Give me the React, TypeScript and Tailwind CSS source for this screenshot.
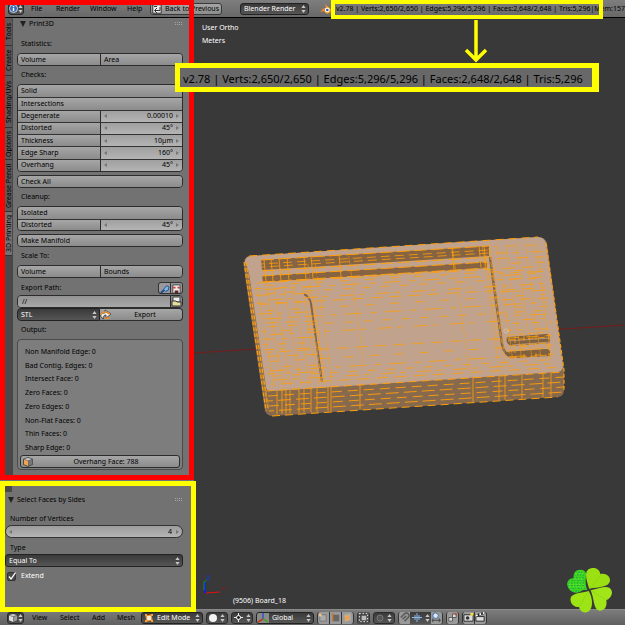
import { useState } from "react";
import type { ReactNode } from "react";

const DARK = "bg-linear-to-b from-[#3a3a3a] to-[#555555] text-white";
const LIGHT = "bg-linear-to-b from-[#a6a6a6] to-[#8c8c8c] text-black";

const stats =
  "v2.78 | Verts:2,650/2,650 | Edges:5,296/5,296 | Faces:2,648/2,648 | Tris:5,296";

const tabs = [
  { name: "Tools", size: "h-[28px]" },
  { name: "Create", size: "h-[30px]" },
  { name: "Shading/UVs", size: "h-[52px]" },
  { name: "Options", size: "h-[32px]" },
  { name: "Grease Pencil", size: "h-[52px]" },
  { name: "3D Printing", size: "h-[44px]" },
];

const checks = [
  { name: "Degenerate", value: "0.00010" },
  { name: "Distorted", value: "45°" },
  { name: "Thickness", value: "10µm" },
  { name: "Edge Sharp", value: "160°" },
  { name: "Overhang", value: "45°" },
];

const output = [
  "Non Manifold Edge: 0",
  "Bad Contig. Edges: 0",
  "Intersect Face: 0",
  "Zero Faces: 0",
  "Zero Edges: 0",
  "Non-Flat Faces: 0",
  "Thin Faces: 0",
  "Sharp Edge: 0",
];

function UpDown() {
  return (
    <svg viewBox="0 0 5 8" className="pointer-events-none h-2 w-[5px] shrink-0">
      <path d="M2.5 0 4.6 3H.4zM2.5 8 .4 5h4.2z" fill="#c8c8c8" />
    </svg>
  );
}

function Grip() {
  return (
    <svg viewBox="0 0 8 4" className="ml-auto h-1 w-2" shapeRendering="crispEdges">
      <path d="M0 .5h8M0 2.5h8" stroke="#a5a5a5" strokeDasharray="1 1" />
    </svg>
  );
}

function Triangle() {
  return (
    <svg viewBox="0 0 6 6" className="h-1.5 w-1.5">
      <path d="M0 0h6L3 6z" fill="#222" />
    </svg>
  );
}

function Label({ children }: { children: ReactNode }) {
  return <div className="flex h-[18px] items-center pl-1">{children}</div>;
}

function Box({ children, className = "h-[13px]" }: { children: ReactNode; className?: string }) {
  return (
    <div className={`grid auto-rows-fr overflow-hidden rounded-[4px] border border-[#2c2c2c] ${className}`}>
      {children}
    </div>
  );
}

function Row({ children }: { children: ReactNode }) {
  return <div className="grid min-h-0 grid-cols-2 border-t border-[#333] first:border-t-0">{children}</div>;
}

function Cell({ children, wide }: { children: ReactNode; wide?: boolean }) {
  return (
    <button
      className={`flex min-h-0 items-center border-l border-[#2c2c2c] pl-[3px] first:border-l-0 ${LIGHT} ${wide ? "col-span-2" : ""}`}
    >
      {children}
    </button>
  );
}

function NumberCell({ name, value }: { name: string; value: string }) {
  const [text, setText] = useState(value);
  return (
    <div className="flex min-h-0 min-w-0 items-center justify-between border-l border-[#2c2c2c] bg-linear-to-b from-[#a0a0a0] to-[#b4b4b4] px-[3px]">
      <Arrow />
      <input
        aria-label={name}
        value={text}
        onChange={(e) => setText(e.target.value)}
        className="w-0 flex-1 bg-transparent pr-[3px] text-right leading-[10px] outline-none"
      />
      <Arrow right />
    </div>
  );
}

function Arrow({ right }: { right?: boolean }) {
  return (
    <svg viewBox="0 0 3 4" className="h-1 w-[3px] shrink-0">
      <path d={right ? "M0 0v4l3-2z" : "M3 0v4L0 2z"} fill="#777" />
    </svg>
  );
}

interface DropProps {
  name: string;
  value: string;
  className: string;
  id?: string;
  icon?: ReactNode;
}

function Drop({ name, value, className, id, icon }: DropProps) {
  return (
    <div className={`flex items-center border border-[#222] pr-0.5 ${DARK} ${className}`}>
      {icon}
      <select
        id={id}
        aria-label={name}
        className="h-full w-0 flex-1 appearance-none bg-transparent pl-[3px] leading-[10px] outline-none"
      >
        <option>{value}</option>
      </select>
      <UpDown />
    </div>
  );
}

function IconDrop({ name, children, className = "w-[22px]" }: { name: string; children: ReactNode; className?: string }) {
  return (
    <button aria-label={name} className={`flex h-3 items-center justify-around rounded-[3px] border border-[#2a2a2a] ${DARK} ${className}`}>
      {children}
      <UpDown />
    </button>
  );
}

function IconButton({ name, children, dark }: { name: string; children: ReactNode; dark?: boolean }) {
  return (
    <button
      aria-label={name}
      className={`flex h-3 w-[11px] items-center justify-center ${dark ? "bg-[#4a4a4a]" : "bg-[#999]"}`}
    >
      <svg viewBox="0 0 12 12" className="h-[11px] w-[11px]">
        {children}
      </svg>
    </button>
  );
}

function Cube({ face = "#ddd", front = "#999" }: { face?: string; front?: string }) {
  return (
    <svg viewBox="0 0 10 10" className="h-2.5 w-2.5 shrink-0">
      <path d="M5 .5 9.5 2v5.5L5 9.5.5 7.5V2z" fill="#555" stroke="#333" strokeWidth=".6" />
      <path d="M1 2.6 5 4v5L1 7.2z" fill={face} />
      <path d="M5.4 4 9.2 2.6v4.6L5.4 9z" fill={front} />
      <path d="M1.2 2 5 .9 8.8 2 5 3.4z" fill="#ccc" />
    </svg>
  );
}

function Header() {
  return (
    <header className="flex h-[18px] items-center overflow-hidden border-b border-black bg-linear-to-b from-[#7e7e7e] to-[#686868] pl-2">
      <IconDrop name="Editor type" className="w-[16px]">
        <svg viewBox="0 0 9 9" className="h-[9px] w-[9px]">
          <circle cx="4.5" cy="4.5" r="4" fill="#3c6bb0" stroke="#e5eefa" strokeWidth=".8" />
          <path d="M4.5 2v1.2M4.5 4v3" stroke="#fff" strokeWidth="1.4" />
        </svg>
      </IconDrop>
      <nav className="flex shrink-0 pl-[7px]">
        <button className="w-[25px] text-left">File</button>
        <button className="w-[34px] text-left">Render</button>
        <button className="w-[37px] text-left">Window</button>
        <button className="w-[23px] text-left">Help</button>
      </nav>
      <button className={`flex h-3 w-[72px] shrink-0 items-center gap-[3px] rounded-[3px] border border-[#3a3a3a] pl-px whitespace-nowrap ${LIGHT}`}>
        <svg viewBox="0 0 10 10" className="h-2.5 w-2.5 shrink-0">
          <path d="M.8.8h8.4v8.4H.8z" fill="#eee" stroke="#333" />
          <path d="M8 3v3.5H3M5 4 2.5 6.5 5 9M2 2.500h3" stroke="#333" fill="none" />
        </svg>
        Back to Previous
      </button>
      <Drop name="Render engine" value="Blender Render" className="ml-[18px] h-3 w-[69px] shrink-0 rounded-[3px]" />
      <svg viewBox="0 0 12 10" className="ml-[11px] h-2.5 w-3 shrink-0">
        <path d="M5 0 11 5a3.6 3.6 0 1 1-7 2L0 8l3-3H1l5-1z" fill="#f08a24" />
        <circle cx="7.3" cy="6" r="2.4" fill="#fff" />
        <circle cx="7.3" cy="6" r="1.3" fill="#2b5fa8" />
      </svg>
      <p className="flex pl-1 whitespace-nowrap">
        <span>{stats}</span>
        <span>|Mem:157</span>
      </p>
    </header>
  );
}

function Print3D() {
  return (
    <section className="flex h-[462px] bg-[#727272] pl-[5px]">
      <div className="flex w-2 shrink-0 flex-col bg-[#484848]">
        {tabs.map((tab) => (
          <button
            key={tab.name}
            className={`flex w-[7px] rotate-180 items-center justify-center overflow-hidden border-t border-[#333] whitespace-nowrap [writing-mode:vertical-rl] ${tab.size} ${tab.name === "3D Printing" ? "bg-[#727272]" : "bg-[#5a5a5a]"}`}
          >
            {tab.name}
          </button>
        ))}
      </div>
      <div className="flex min-w-0 flex-1 flex-col pt-px pr-[11px] pl-1">
        <h2 className="mb-1.5 flex h-2.5 items-center gap-[3px] pl-[3px]">
          <Triangle />
          Print3D
          <Grip />
        </h2>
        <Label>Statistics:</Label>
        <Box>
          <Row>
            <Cell>Volume</Cell>
            <Cell>Area</Cell>
          </Row>
        </Box>
        <Label>Checks:</Label>
        <Box className="h-[88px]">
          <Row>
            <Cell wide>Solid</Cell>
          </Row>
          <Row>
            <Cell wide>Intersections</Cell>
          </Row>
          {checks.map((c) => (
            <Row key={c.name}>
              <Cell>{c.name}</Cell>
              <NumberCell name={c.name} value={c.value} />
            </Row>
          ))}
        </Box>
        <Box className="mt-[3px] h-[13px]">
          <Row>
            <Cell wide>Check All</Cell>
          </Row>
        </Box>
        <Label>Cleanup:</Label>
        <Box className="h-[25px]">
          <Row>
            <Cell wide>Isolated</Cell>
          </Row>
          <Row>
            <Cell>Distorted</Cell>
            <NumberCell name="Cleanup distorted" value="45°" />
          </Row>
        </Box>
        <Box className="mt-[3px] h-[13px]">
          <Row>
            <Cell wide>Make Manifold</Cell>
          </Row>
        </Box>
        <Label>Scale To:</Label>
        <Box>
          <Row>
            <Cell>Volume</Cell>
            <Cell>Bounds</Cell>
          </Row>
        </Box>
        <div className="mt-1 mb-px flex h-3 items-center pl-1">
          <label htmlFor="path" className="flex-1">
            Export Path:
          </label>
          <div className="flex h-3 gap-px overflow-hidden rounded-[3px] border border-[#333] bg-[#333]">
            <IconButton name="Apply scale">
              <path d="M2 10 6 6" stroke="#24508c" strokeWidth="2.4" />
              <path d="M5 6 8 2l3 1-1 4-3 1z" fill="#7fb2f0" stroke="#24508c" />
            </IconButton>
            <IconButton name="Copy textures">
              <path d="M2 1h8v9H2z" fill="#eee" stroke="#444" />
              <path d="M2 4h3M7 4h3" stroke="#c44" strokeWidth="2" />
              <path d="M4 7h4v3H4z" fill="#622" />
            </IconButton>
          </div>
        </div>
        <div className="flex h-[13px] overflow-hidden rounded-[4px] border border-[#2c2c2c]">
          <input id="path" defaultValue="//" className="min-w-0 flex-1 bg-linear-to-b from-[#929292] to-[#a8a8a8] pl-1 leading-[10px] outline-none" />
          <button aria-label="Browse" className="w-3 border-l border-[#2c2c2c] bg-[#888]">
            <svg viewBox="0 0 11 11" className="h-[11px] w-[11px]">
              <path d="M2 1h7v5H2z" fill="#eee" stroke="#444" />
              <path d="M1 5h4l1 1h4v4H1z" fill="#e4dda0" stroke="#333" />
            </svg>
          </button>
        </div>
        <div className="flex h-[13px]">
          <Drop name="Format" value="STL" className="w-1/2 rounded-l-[4px]" />
          <button className={`flex w-1/2 items-center rounded-r-[4px] border border-l-0 border-[#2c2c2c] ${LIGHT}`}>
            <svg viewBox="0 0 12 11" className="h-[11px] w-3 shrink-0">
              <path d="M1 8c-1-3 2-4 4-4V1l6 4-5 4V6C4 6 3 7 4 10z" fill="#eee" stroke="#333" strokeWidth=".8" />
              <path d="M1 6c1-3 3-3 5-3l4 2M4 9h6" stroke="#e88a2c" strokeWidth="1.5" fill="none" />
            </svg>
            <span className="flex-1 pr-1">Export</span>
          </button>
        </div>
        <Label>Output:</Label>
        <div className="h-[131px] rounded-[4px] border border-[#4a4a4a] bg-[#7d7d7d] px-0.5 pt-[5px]">
          <ul className="grid h-[110px] auto-rows-fr pl-[5px]">
            {output.map((line) => (
              <li key={line} className="flex items-center">
                {line}
              </li>
            ))}
          </ul>
          <button className={`flex h-[13px] w-full items-center rounded-[3px] border border-[#2c2c2c] pl-0.5 ${LIGHT}`}>
            <Cube face="#f2a44c" front="#777" />
            <span className="flex-1">Overhang Face: 788</span>
          </button>
        </div>
      </div>
    </section>
  );
}

function SelectFaces() {
  return (
    <section className="flex-1 bg-[#727272] pt-[6px] pr-[11px] pl-[5px]">
      <div className="h-1.5 w-[7px] bg-[#484848]" />
      <h2 className="flex h-4 items-center gap-[3px] pl-[3px]">
        <Triangle />
        Select Faces by Sides
        <Grip />
      </h2>
      <label htmlFor="verts" className="mt-[5px] flex h-3 items-center pl-[5px]">
        Number of Vertices
      </label>
      <div className="flex h-[13px] items-center rounded-full border border-[#333] bg-linear-to-b from-[#9c9c9c] to-[#b4b4b4] px-[3px]">
        <Arrow />
        <input id="verts" defaultValue="4" className="w-0 flex-1 bg-transparent pr-1 text-right leading-[10px] outline-none" />
        <Arrow right />
      </div>
      <label htmlFor="compare" className="mt-1 flex h-3 items-center pl-[5px]">
        Type
      </label>
      <Drop id="compare" name="Type" value="Equal To" className="h-[13px] rounded-[3px]" />
      <label className="mt-[3px] flex h-3 items-center gap-[5px] pl-0.5 text-white">
        <span className="grid h-[9px] w-[9px]">
          <input type="checkbox" defaultChecked className="peer col-start-1 row-start-1 appearance-none rounded-[2px] border border-[#333] bg-[#4a4a4a]" />
          <svg viewBox="0 0 9 9" className="pointer-events-none invisible col-start-1 row-start-1 peer-checked:visible">
            <path d="M2 4.500 4 7l4.500-6.500" stroke="#fff" strokeWidth="1.300" fill="none" />
          </svg>
        </span>
        Extend
      </label>
    </section>
  );
}

type Point = [number, number];

// corners of the board's top face: back left, back right, front right, front left
const corners: Point[] = [
  [247, 257],
  [544, 238],
  [562, 371],
  [266, 390],
];

function onFace(u: number, v: number): string {
  const [a, b, c, d] = corners;
  const mix = (i: 0 | 1) =>
    (1 - v) * ((1 - u) * a[i] + u * b[i]) + v * ((1 - u) * d[i] + u * c[i]);
  return `${mix(0).toFixed(1)} ${mix(1).toFixed(1)}`;
}

const seg = (u1: number, v1: number, u2: number, v2: number) =>
  `M${onFace(u1, v1)}L${onFace(u2, v2)}`;

const rows = [
  ...[0.2, 0.22, 0.25, 0.28, 0.33, 0.36, 0.41, 0.47, 0.53, 0.59, 0.72, 0.79, 0.86, 0.9, 0.93, 0.96].map((v) =>
    seg(0.02, v, 0.98, v + 0.01),
  ),
  ...[0.24, 0.29, 0.35, 0.43, 0.5, 0.56, 0.62, 0.66, 0.7, 0.75, 0.83, 0.88].map((v) => seg(0.01, v, 0.2, v + 0.01)),
  ...[0.04, 0.09, 0.13, 0.17, 0.24, 0.29, 0.38, 0.44, 0.5, 0.56, 0.62, 0.67].map((v) => seg(0.83, v, 0.99, v + 0.01)),
];
const dashes = ["12 7", "9 16", "17 9 6 8", "8 11", "14 5 5 12"];

const faceColumns = [
  ...[0.02, 0.05, 0.075, 0.11, 0.14, 0.17].map((u) => seg(u, 0.23, u + 0.01, 0.98)),
  ...[0.2, 0.225].map((u) => seg(u, 0.08, u, 0.98)),
  seg(0.34, 0.04, 0.34, 0.84),
  seg(0.69, 0.04, 0.69, 0.96),
  ...[0.79, 0.815].map((u) => seg(u, 0.02, u, 0.96)),
  ...[0.84, 0.87, 0.905, 0.935, 0.97].map((u) => seg(u, 0.03, u, 0.9)),
].join("");
const slotColumns = [264, 271, 279, 287, 304, 311, 339, 452, 479, 484]
  .map((x) => `M${x} ${276 - x * 0.063}l2 22`)
  .join("");
const sideColumns = [277, 282, 286, 290, 299, 304, 311, 317, 328, 331, 360, 473, 499, 505, 522, 543, 551]
  .map((x) => `M${x} ${407 - x * 0.064}v25`)
  .join("");

function Board() {
  return (
    <svg viewBox="194 18 431 591" preserveAspectRatio="xMidYMid meet" className="absolute inset-0 h-full w-full">
      <path d="M194 353 625 325" stroke="#861414" strokeWidth=".8" />
      <path
        d="M244 263q0-6 6-7L538 237q7 0 9 6L564 370V390q0 6-6 7L273 416q-6 0-8-5L245 276z"
        fill="#876a4e"
      />
      <path d="M245 262q0-5 5-6L538 237q6 0 8 6L563 366q0 5-5 6L272 391q-6 0-7-5z" fill="#c0a28d" />
      <path d="M245 264 248 276 268 410" stroke="#96734f" strokeWidth="3" fill="none" />
      <path d="M261 260 489 246V256L262 270zM262 276 487 262V268L263 282z" fill="#856343" />
      <g fill="none" stroke="#7b6250">
        <path d="M304 294q6 3 7 10l11 78" strokeWidth="2" />
        <path d="M490 257 502 344q2 10 8 12" strokeWidth="2.500" />
      </g>
      <path d="M507 337 546 334q4 0 4 4v5l-39 3q-6-3-4-9zM506 352 546 349q4 0 4 3v4l-37 2q-6 0-7-6z" fill="#80613f" />
      <path d="M508 341 550 338M512 345l38-3" stroke="#c0a28d" strokeWidth=".8" />
      <g fill="none" stroke="#ff9f0a">
        {rows.map((d, i) => (
          <path key={d} d={d} strokeWidth=".8" strokeDasharray={dashes[i % 5]} strokeDashoffset={(i * 17) % 41} />
        ))}
        <path d={faceColumns} strokeWidth=".6" strokeDasharray="11 2" opacity=".8" />
        <path d={slotColumns} strokeWidth=".8" />
        <path d={sideColumns} strokeWidth=".8" />
        <path d="M261 260 489 246M262 271 489 257M262 276 488 262M262 282 488 268" strokeDasharray="13 4" />
        <path d="M261 264 489 250M262 267 489 253" strokeDasharray="9 5" strokeDashoffset="6" strokeWidth=".8" />
        <path d="M268 396 564 377M269 406 564 387" strokeDasharray="10 6" strokeWidth=".9" />
        <path d="M268 401 564 382M269 411 564 392" strokeDasharray="13 5" strokeDashoffset="8" strokeWidth=".9" />
        <path d="M249 256 538 237M266 391 563 372M272 416 558 397" strokeDasharray="8 5" />
        <path d="M244 262 266 411M246 262 268 408M546 243 564 370V391" strokeDasharray="4 2" strokeWidth="1.200" />
        <path d="M308 294l14 88M313 298l12 84M489 248l12 91q2 10 9 14M486 255l13 91q3 10 10 12" strokeDasharray="5 2" strokeWidth=".7" />
        <path d="M508 335 546 332M508 340 549 337M509 346 549 343M507 351 549 348M510 358 549 355M515 336v22M524 334v24M536 333v24M549 333v32" strokeDasharray="7 3" strokeWidth=".8" />
      </g>
      <circle cx="506" cy="331" r="2" fill="none" stroke="#eee" strokeWidth=".8" strokeDasharray="1 1" />
      <path d="M205 593 220 592" stroke="#e01010" />
      <path d="m222 590 3-3m-3 0 3 3" stroke="#a01010" strokeWidth=".8" />
      <path d="M205 593V582" stroke="#1020e0" strokeWidth="2" />
      <path d="M204 590V582l3-2" stroke="#0d990d" fill="none" />
      <path d="M206 576h4l-4 4h4" stroke="#1838b8" fill="none" />
    </svg>
  );
}

function Clover() {
  return (
    <svg viewBox="483 20 141 138" className="absolute right-3 -bottom-1 z-10 h-[46px] w-[47px]">
      <path d="M553 85C545 60 534 30 558 24c15-4 26 4 28 17 16-4 30 6 29 21-4 19-34 18-62 23z" fill="#9be012" />
      <path d="M557 90c22-5 42-14 56-8 13 8 10 30-9 38 3 20-6 32-21 31-18-3-15-36-26-61z" fill="#a2e61a" />
      <path d="M551 92c14 23 15 58-6 64-13 2-21-6-23-16-17 0-28-12-25-28 6-14 33-14 54-20z" fill="#9ce414" />
      <path d="M547 88c-9-18-3-38-4-50-5-12-28-13-35 0-4 8-1 14-3 16-16 0-22 14-16 27 9 20 32 19 43 9z" fill="#3fd622" />
      <path
        d="M512 36h28M508 44h32M506 52h34M492 60h48M490 68h50M490 76h52M494 84h46M503 92h24"
        stroke="#12a545"
        strokeWidth="3"
        strokeDasharray="3 5 5 4"
      />
      <path d="M511 40h28M508 56h30M492 72h46M493 80h46" stroke="#8df04a" strokeWidth="2" strokeDasharray="4 6" />
      <path d="M554 86l34-42M557 90l46 28M551 92l-28 46" stroke="#82c814" strokeWidth="1.500" />
    </svg>
  );
}

function Viewport() {
  return (
    <main className="relative flex min-w-0 flex-1 flex-col justify-between bg-[#393939] pt-1 pb-[2px] pl-2 text-white">
      <Board />
      <div className="relative">
        <p className="leading-[12px]">User Ortho</p>
        <p className="leading-[13px]">Meters</p>
      </div>
      <p className="relative pl-[31px] leading-[12px]">(9506) Board_18</p>
      <Clover />
    </main>
  );
}

function Footer() {
  return (
    <footer className="flex h-4 shrink-0 items-center overflow-hidden border-t border-[#8a8a8a] bg-linear-to-b from-[#7c7c7c] to-[#606060] pl-[7px]">
      <IconDrop name="3D view" className="w-[17px]">
        <Cube />
      </IconDrop>
      <nav className="flex shrink-0 pl-2">
        <button className="w-[28px] text-left">View</button>
        <button className="w-[32px] text-left">Select</button>
        <button className="w-[25px] text-left">Add</button>
        <button className="w-[24px] text-left">Mesh</button>
      </nav>
      <Drop
        name="Mode"
        value="Edit Mode"
        className="h-3 w-[62px] shrink-0 rounded-[3px]"
        icon={
          <svg viewBox="0 0 10 10" className="ml-0.5 h-2.5 w-2.5">
            <path d="m2 3 5-1 1 5-5 1z" fill="#eee" stroke="#f09020" strokeWidth="1.200" />
            <path d="M1 1h2v2H1zM7 1h2v2H7zM7 7h2v2H7zM1 7h2v2H1z" fill="#f5a030" />
          </svg>
        }
      />
      <div className="flex shrink-0 gap-[3px] pl-[3px]">
        <IconDrop name="Shading">
          <svg viewBox="0 0 8 8" className="h-2 w-2">
            <circle cx="4" cy="4" r="4" fill="#f2f2f2" />
          </svg>
        </IconDrop>
        <IconDrop name="Pivot">
          <svg viewBox="0 0 9 9" className="h-[9px] w-[9px]">
            <path d="M4.500 0v3M4.500 6v3M0 4.500h3M6 4.500h3" stroke="#eee" />
            <circle cx="4.500" cy="4.500" r="2" fill="#222" stroke="#fff" />
          </svg>
        </IconDrop>
        <Drop
          name="Orientation"
          value="Global"
          className="h-3 w-[58px] overflow-hidden rounded-[3px]"
          icon={
            <svg viewBox="0 0 12 12" className="h-3 w-3 bg-[#8a8a8a]">
              <path d="M6 7V1" stroke="#2857c8" strokeWidth="1.500" />
              <path d="M6 7 1 10" stroke="#c83220" strokeWidth="1.500" />
              <path d="m6 7 5 3" stroke="#4ca030" strokeWidth="1.500" />
            </svg>
          }
        />
        <div className="flex gap-px overflow-hidden rounded-[3px] border-x border-[#333] bg-[#333]">
          <IconButton name="Vertex select">
            <path d="M2 3h7v7H2z" fill="#aaa" stroke="#777" />
            <path d="M1 2h3v3H1z" fill="#eac18c" />
          </IconButton>
          <IconButton name="Edge select">
            <path d="M3 3h7v7H3z" fill="#666" />
            <path d="M3 1v9" stroke="#c8762c" strokeWidth="1.500" />
          </IconButton>
          <IconButton name="Face select">
            <path d="M2 3 8 1l2 2v6l-6 2z" fill="#aaa" />
            <path d="M3 4 8 3v6l-5 1z" fill="#eba55a" />
          </IconButton>
        </div>
        <div className="overflow-hidden rounded-[3px] border-x border-[#333]">
          <IconButton name="Limit selection to visible" dark>
            <path d="M4 4h5v5H4z" fill="#bbb" />
            <path d="M1.500 1.500h9v9h-9z" fill="none" stroke="#fff" strokeDasharray="1.500 2" />
          </IconButton>
        </div>
        <IconDrop name="Proportional editing">
          <svg viewBox="0 0 8 8" className="h-2 w-2">
            <circle cx="4" cy="4" r="3" fill="#555" stroke="#777" />
          </svg>
        </IconDrop>
        <div className="flex overflow-hidden rounded-[3px] border-x border-[#333]">
          <IconButton name="Snap">
            <path d="M2 6 6 2a2 2 0 0 1 4 4L6 10M4 8l4-4" stroke="#555" strokeWidth="1.500" fill="none" />
          </IconButton>
          <button aria-label="Snap element" className={`flex h-3 w-[21px] items-center justify-around ${DARK}`}>
            <svg viewBox="0 0 10 9" className="h-[9px] w-2.5">
              <path d="M0 4.500h10M3 2v5M7 2v5M5 0v9" stroke="#8cb8e8" />
            </svg>
            <UpDown />
          </button>
          <IconButton name="Snap target">
            <circle cx="5" cy="4" r="3" fill="#dce9fa" stroke="#3468a8" />
            <path d="M1 9h10M2 7v4M9 7v4" stroke="#444" />
          </IconButton>
        </div>
        <div className="overflow-hidden rounded-[3px] border-x border-[#333]">
          <IconButton name="Auto merge">
            <path d="M2 6h4v4H2zM6 2h4v4H6z" fill="#ddd" stroke="#555" />
            <path d="M7 2h3v2" stroke="#c84020" fill="none" />
          </IconButton>
        </div>
        <div className="flex gap-px overflow-hidden rounded-[3px] border-x border-[#333] bg-[#333]">
          <IconButton name="Render image">
            <path d="M1 3h10v7H1z" fill="#ddd" stroke="#222" />
            <circle cx="5" cy="6.500" r="2" fill="#333" />
            <path d="M8 1h3v3H8z" fill="#f5dc35" />
          </IconButton>
          <IconButton name="Render animation">
            <path d="M1 5h9v5H1z" fill="#ddd" stroke="#222" />
            <path d="m1 4 9-3" stroke="#222" strokeWidth="2.500" />
            <path d="m1 4 9-3" stroke="#fff" strokeWidth="2" strokeDasharray="2 2" />
          </IconButton>
        </div>
      </div>
    </footer>
  );
}

function Annotations() {
  return (
    <div className="pointer-events-none absolute inset-0 z-20 overflow-hidden">
      <div className="absolute top-0 left-0 h-[480px] w-[194px] border-[5px] border-[#ff0000]" />
      <div className="absolute top-[481px] left-0 h-[131px] w-[196px] border-[5px] border-[#ffff00]" />
      <div className="absolute top-0 left-[331px] h-[19px] w-[272px] border-4 border-[#ffff00]" />
      <svg viewBox="0 0 24 44" className="absolute top-[19px] left-[464px] h-11 w-6">
        <path d="M12 1v40M2 31l10 10 10-10" stroke="#ffff00" strokeWidth="3.500" fill="none" />
      </svg>
      <p className="absolute top-[63px] left-[175px] flex h-[29px] w-[424px] items-center border-[5px] border-r-[7px] border-[#ffff00] bg-[#686868] pt-0.5 pl-[3px] text-[11px] whitespace-nowrap text-black">
        {stats}
      </p>
    </div>
  );
}

export default function App() {
  return (
    <div className="relative flex min-h-screen flex-col overflow-hidden bg-[#393939] font-['Noto_Sans',sans-serif] text-[7px] leading-[10px] text-black">
      <Header />
      <div className="flex flex-1">
        <aside className="flex w-[194px] shrink-0 flex-col">
          <Print3D />
          <SelectFaces />
        </aside>
        <Viewport />
      </div>
      <Footer />
      <Annotations />
    </div>
  );
}
